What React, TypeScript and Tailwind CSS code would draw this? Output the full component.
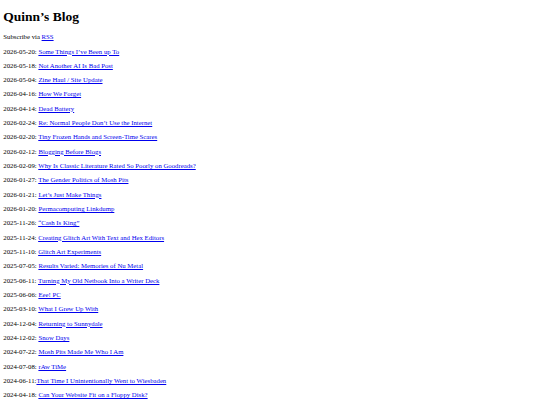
const posts: [string, string][] = [
  ["2026-05-20: ", "Some Things I’ve Been up To"],
  ["2026-05-18: ", "Not Another AI Is Bad Post"],
  ["2026-05-04: ", "Zine Haul / Site Update"],
  ["2026-04-16: ", "How We Forget"],
  ["2026-04-14: ", "Dead Battery"],
  ["2026-02-24: ", "Re: Normal People Don’t Use the Internet"],
  ["2026-02-20: ", "Tiny Frozen Hands and Screen-Time Scares"],
  ["2026-02-12: ", "Blogging Before Blogs"],
  ["2026-02-09: ", "Why Is Classic Literature Rated So Poorly on Goodreads?"],
  ["2026-01-27: ", "The Gender Politics of Mosh Pits"],
  ["2026-01-21: ", "Let’s Just Make Things"],
  ["2026-01-20: ", "Permacomputing Linkdump"],
  ["2025-11-26: ", "“Cash Is King”"],
  ["2025-11-24: ", "Creating Glitch Art With Text and Hex Editors"],
  ["2025-11-10: ", "Glitch Art Experiments"],
  ["2025-07-05: ", "Results Varied: Memories of Nu Metal"],
  ["2025-06-11: ", "Turning My Old Netbook Into a Writer Deck"],
  ["2025-06-06: ", "Eee! PC"],
  ["2025-03-10: ", "What I Grew Up With"],
  ["2024-12-04: ", "Returning to Sunnydale"],
  ["2024-12-02: ", "Snow Days"],
  ["2024-07-22: ", "Mosh Pits Made Me Who I Am"],
  ["2024-07-08: ", "rAw TiMe"],
  ["2024-06-11:", "That Time I Unintentionally Went to Wiesbaden"],
  ["2024-04-18: ", "Can Your Website Fit on a Floppy Disk?"],
];

export default function App() {
  return (
    <div className="min-h-screen bg-white px-[3.33px] pt-[8.93px] font-['Liberation_Serif',serif] text-[6.75px] leading-[7.667px] text-black">
      <h1 className="mb-[8.93px] text-[13.5px] font-bold leading-[15.33px]">Quinn’s Blog</h1>
      <p className="my-[6.667px]">
        Subscribe via <a href="#" className="text-[#0000ee] underline">RSS</a>
      </p>
      {posts.map(([date, title]) => (
        <p key={title} className="my-[6.667px] whitespace-pre">
          {date}
          <a href="#" className="text-[#0000ee] underline">{title}</a>
        </p>
      ))}
    </div>
  );
}
